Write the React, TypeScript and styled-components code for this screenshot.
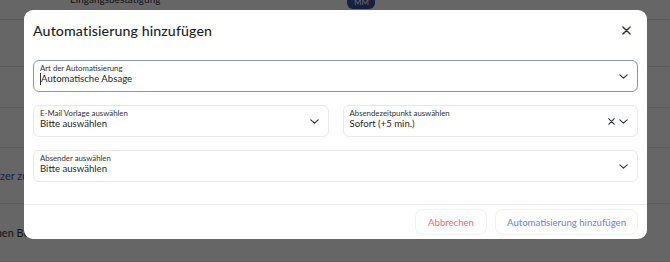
import React from "react";
import styled, { createGlobalStyle } from "styled-components";

const GlobalStyle = createGlobalStyle`
  html, body {
    margin: 0;
    padding: 0;
    background: #fff;
  }
  body {
    font-family: Lato, "Noto Sans", sans-serif;
    color: #222;
  }
  #root {
    width: 670px;
    height: 262px;
    overflow: hidden;
    position: relative;
  }
`;

/* background page (behind overlay) */
const Page = styled.div`
  width: 670px;
  height: 262px;
  background: #fff;
  display: flex;
  flex-direction: column;
  overflow: hidden;
`;

const PageHeader = styled.div`
  height: 30px;
  margin-top: -10px;
  flex-shrink: 0;
  display: flex;
  align-items: flex-start;
  padding-left: 70px;
  gap: 187px;
  border-bottom: 1px solid #e2e2e2;
  font-size: 10px;
  color: #333;
  box-sizing: border-box;
`;

const HeaderText = styled.span`
  margin-top: 3px;
`;

const Avatar = styled.div`
  width: 28px;
  height: 19px;
  border-radius: 6px;
  background: #3a4fa8;
  color: #fff;
  font-size: 8px;
  display: flex;
  align-items: flex-end;
  justify-content: center;
  padding-bottom: 2px;
  box-sizing: border-box;
`;

const PageRow = styled.div<{ $h: number }>`
  height: ${(p) => p.$h}px;
  flex-shrink: 0;
  box-sizing: border-box;
  border-bottom: 1px solid #e6e6e6;
  display: flex;
  align-items: center;
  font-size: 11px;
  color: ${(p) => (p.color ? p.color : "#333")};
  white-space: nowrap;
`;

const RowText = styled.span<{ $indent: number }>`
  margin-left: ${(p) => p.$indent}px;
`;

/* overlay + modal */
const Overlay = styled.div`
  position: absolute;
  inset: 0;
  background: rgba(0, 0, 0, 0.6);
  padding: 10px 0 0 24px;
  box-sizing: border-box;
`;

const Modal = styled.div`
  width: 623px;
  height: 229px;
  background: #fff;
  border-radius: 9px;
  display: flex;
  flex-direction: column;
  overflow: hidden;
`;

const Header = styled.div`
  display: flex;
  align-items: center;
  justify-content: space-between;
  padding: 0 15px 0 9px;
  height: 40px;
  box-sizing: border-box;
`;

const Title = styled.h2`
  margin: 0;
  font-size: 14.2px;
  font-weight: 500;
  color: #1e1e1e;
  letter-spacing: 0.1px;
`;

const CloseButton = styled.button`
  border: none;
  background: none;
  padding: 0;
  width: 12px;
  height: 12px;
  display: flex;
  align-items: center;
  justify-content: center;
  color: #2c3440;
`;

const Body = styled.div`
  padding: 10px 9px 0 9px;
  display: flex;
  flex-direction: column;
  gap: 13px;
  flex: 1;
`;

const Row = styled.div`
  display: grid;
  grid-template-columns: 1fr 1fr;
  gap: 14px;
`;

const Field = styled.div<{ $focused?: boolean }>`
  height: 32px;
  box-sizing: border-box;
  border: 1px solid ${(p) => (p.$focused ? "#8c979f" : "#e9e9e9")};
  border-radius: 6px;
  display: flex;
  align-items: center;
  padding: 0 9px 0 6px;
`;

const FieldText = styled.div`
  flex: 1;
  align-self: flex-start;
  padding-top: 2px;
  display: flex;
  flex-direction: column;
`;

const Label = styled.span`
  font-size: 7.8px;
  line-height: 10px;
  color: #333;
`;

const Value = styled.span<{ $caret?: boolean }>`
  font-size: 9.6px;
  line-height: 12px;
  color: #1f1f1f;
  ${(p) => (p.$caret ? "border-left: 1px solid #333;" : "")}
`;

const Icons = styled.div`
  display: flex;
  align-items: center;
  gap: 4px;
  color: #2b2f36;
`;

const Footer = styled.div`
  border-top: 1px solid #ececec;
  height: 34px;
  flex-shrink: 0;
  display: flex;
  align-items: center;
  justify-content: flex-end;
  gap: 8px;
  padding-right: 9px;
`;

const FooterButton = styled.button<{ $tone: "danger" | "primary"; $w: number }>`
  width: ${(p) => p.$w}px;
  height: 26px;
  border: 1px solid #f1f1f1;
  border-radius: 8px;
  background: #fff;
  font-family: inherit;
  font-size: 9.6px;
  color: ${(p) => (p.$tone === "danger" ? "#ef6b6b" : "#6d80ee")};
  cursor: pointer;
`;

const Chevron = () => (
  <svg width="9" height="5" viewBox="0 0 9 5" fill="none">
    <path d="M0.8 0.8l3.7 3.4 3.7-3.4" stroke="currentColor" strokeWidth="1.1" strokeLinecap="round" strokeLinejoin="round" />
  </svg>
);

const Cross = ({ size }: { size: number }) => (
  <svg width={size} height={size} viewBox="0 0 10 10" fill="none">
    <path d="M1 1l8 8M9 1l-8 8" stroke="currentColor" strokeWidth="1.5" strokeLinecap="round" />
  </svg>
);

interface SelectProps {
  label: string;
  value: string;
  focused?: boolean;
  clearable?: boolean;
}

const Select: React.FC<SelectProps> = ({ label, value, focused, clearable }) => (
  <Field $focused={focused}>
    <FieldText>
      <Label>{label}</Label>
      <Value $caret={focused}>{value}</Value>
    </FieldText>
    <Icons>
      {clearable && <Cross size={7} />}
      <Chevron />
    </Icons>
  </Field>
);

export default function App() {
  return (
    <>
      <GlobalStyle />
      <Page>
        <PageHeader>
          <HeaderText>Eingangsbestätigung</HeaderText>
          <Avatar>MM</Avatar>
        </PageHeader>
        <PageRow $h={47} />
        <PageRow $h={41} />
        <PageRow $h={40} />
        <PageRow $h={56} color="#3b55c6">
          <RowText $indent={-29}>Benutzer zuweisen</RowText>
        </PageRow>
        <PageRow $h={58}>
          <RowText $indent={-26}>Offenen Bewerbungen</RowText>
        </PageRow>
      </Page>
      <Overlay>
        <Modal>
          <Header>
            <Title>Automatisierung hinzufügen</Title>
            <CloseButton aria-label="Schließen">
              <Cross size={9} />
            </CloseButton>
          </Header>
          <Body>
            <Select label="Art der Automatisierung" value="Automatische Absage" focused />
            <Row>
              <Select label="E-Mail Vorlage auswählen" value="Bitte auswählen" />
              <Select label="Absendezeitpunkt auswählen" value="Sofort (+5 min.)" clearable />
            </Row>
            <Select label="Absender auswählen" value="Bitte auswählen" />
          </Body>
          <Footer>
            <FooterButton $tone="danger" $w={72}>Abbrechen</FooterButton>
            <FooterButton $tone="primary" $w={143}>Automatisierung hinzufügen</FooterButton>
          </Footer>
        </Modal>
      </Overlay>
    </>
  );
}
